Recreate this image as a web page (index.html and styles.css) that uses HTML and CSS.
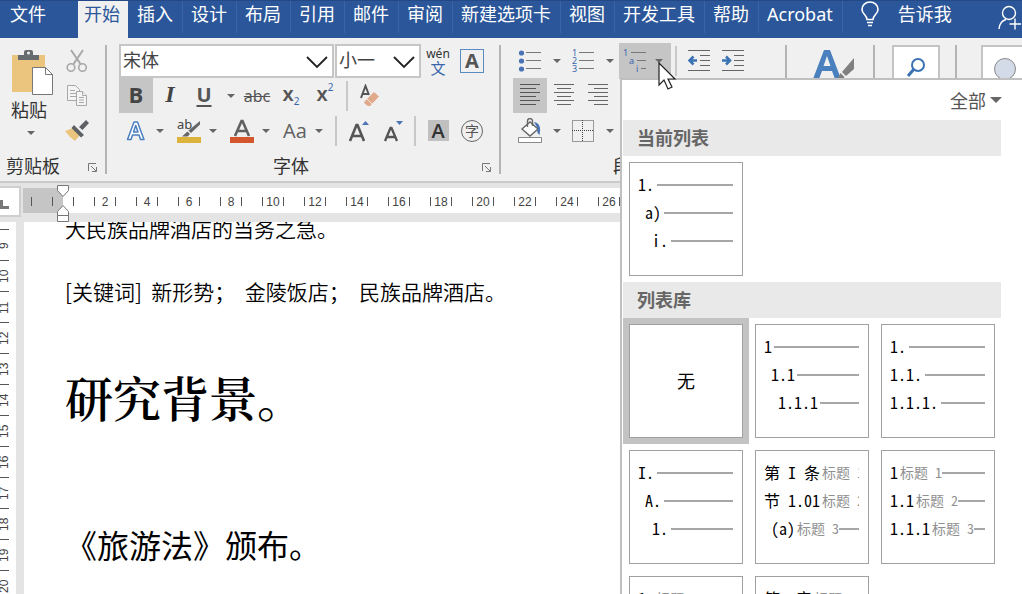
FILE: index.html
```html
<!DOCTYPE html>
<html lang="zh-CN">
<head>
<meta charset="utf-8">
<title>文档</title>
<link rel="stylesheet" href="styles.css">
</head>
<body>
<div class="app">
<nav class="tabs">
  <button class="tab file">文件</button>
  <button class="tab active">开始</button>
  <button class="tab">插入</button>
  <button class="tab">设计</button>
  <button class="tab">布局</button>
  <button class="tab">引用</button>
  <button class="tab">邮件</button>
  <button class="tab">审阅</button>
  <button class="tab">新建选项卡</button>
  <button class="tab">视图</button>
  <button class="tab">开发工具</button>
  <button class="tab">帮助</button>
  <button class="tab">Acrobat</button>
  <button class="tell"><svg width="20" height="26" viewBox="0 0 20 26" fill="none" stroke="#fff" stroke-width="1.6"><path d="M7 18.500C7 14 2 13 2 8.500a8 7.500 0 0 1 16 0C18 13 13 14 13 18.500zM7 21.500h6M8 24.500h4"/></svg>告诉我</button>
  <button class="share" aria-label="共享"><svg width="24" height="26" viewBox="0 0 24 26" fill="none" stroke="#fff" stroke-width="1.400"><circle cx="11" cy="8" r="6.500"/><path d="M1 24c.5-6 3.500-8.500 7-9.500M17 13.500v11M11.500 19H23"/></svg></button>
</nav>

<div class="ribbon">
  <section class="group clipboard">
    <div class="clip-body">
      <button class="paste"><svg width="44" height="48" viewBox="0 0 44 48"><path fill="#ebc57e" d="M1 6h33v37H1z"/><path fill="#666b70" d="M7 11V6h6V3q0-2 2-2h5q2 0 2 2v3h6v5z"/><circle cx="17.500" cy="4" r="1.500" fill="#eee"/><path fill="#fff" stroke="#777" d="M21.500 18.500h13l7 7v20h-20z"/><path fill="none" stroke="#777" d="M34.500 18.500v7h7"/></svg><span>粘贴</span><i class="caret"></i></button>
      <div class="clip-side">
        <button class="tool" aria-label="剪切"><svg width="22" height="24" viewBox="0 0 22 24" fill="none" stroke="#a8a8a8"><path stroke-width="2" d="M5 1l9.500 14M17 1L7.500 15"/><circle cx="5" cy="18.500" r="3.800" stroke-width="1.600"/><circle cx="16.500" cy="18.500" r="3.800" stroke-width="1.600"/></svg></button>
        <button class="tool" aria-label="复制"><svg width="22" height="24" viewBox="0 0 22 24" fill="#f4f4f4" stroke="#a8a8a8"><path d="M1.500 1.500h8l4 4v11h-12z"/><path d="M4 6.500h5M4 9.500h7M4 12.500h7"/><path d="M10.500 7.500h6l4 4v10h-10z"/><path d="M16.500 7.500v4h4M13 13.500h5M13 16h5M13 18.500h5"/></svg></button>
        <button class="tool" aria-label="格式刷"><svg width="24" height="22" viewBox="0 0 24 22"><path fill="#ebc57e" d="M0 11l8-3 7 7-5 6C6 18 3 15 0 11z"/><path fill="#5d6166" d="M9 5l10 10-3 2.500L6.500 8zM14 7l7-7 3 3-6.500 7z"/></svg></button>
      </div>
    </div>
    <div class="group-foot"><span>剪贴板</span><button class="launch" aria-label="剪贴板设置"><svg width="11" height="11" viewBox="0 0 11 11" fill="none" stroke="#777"><path d="M1.500 9V1.500H9M4 4l5 5M9.500 5v4.500H5"/></svg></button></div>
  </section>

  <section class="group font">
    <div class="row">
      <label class="combo family"><select aria-label="字体"><option>宋体</option></select><svg width="22" height="13" viewBox="0 0 22 13" fill="none" stroke="#222" stroke-width="1.800"><path d="M1 1l10 10L21 1"/></svg></label>
      <label class="combo size"><select aria-label="字号"><option>小一</option></select><svg width="22" height="13" viewBox="0 0 22 13" fill="none" stroke="#222" stroke-width="1.800"><path d="M1 1l10 10L21 1"/></svg></label>
      <button class="tool pinyin"><span>wén</span><b>文</b></button>
      <button class="tool"><span class="boxed">A</span></button>
    </div>
    <div class="row">
      <button class="tool on bold">B</button>
      <button class="tool italic">I</button>
      <button class="tool under">U</button><button class="drop" aria-label="下划线选项"><i class="caret"></i></button>
      <button class="tool strike">abc</button>
      <button class="tool script">x<sub>2</sub></button>
      <button class="tool script">x<sup>2</sup></button>
      <i class="sep"></i>
      <button class="tool" aria-label="清除格式"><svg width="22" height="24" viewBox="0 0 22 24"><path fill="none" stroke="#555" stroke-width="2" d="M2 14L6.500 2 10 11M4 10h5"/><path fill="#e0a98c" d="M6 17l9-9 5 4.500-9 9.500H9l-4-3z"/><path stroke="#f6e4da" d="M8 15l5 5"/></svg></button>
    </div>
    <div class="row">
      <button class="tool" aria-label="文本效果"><svg width="22" height="22" viewBox="0 0 22 22"><path fill="#fff" stroke="#4a7fc0" stroke-width="1.500" stroke-linejoin="round" d="M2.500 19.500L9 2h3.500L19 19.500h-3.500L14 15H7.500L6 19.500zM8.500 12h4.500L10.700 5.500z"/></svg></button><button class="drop tight" aria-label="文本效果选项"><i class="caret"></i></button>
      <button class="tool" aria-label="突出显示"><svg width="26" height="26" viewBox="0 0 26 26"><text x="1" y="11" class="ab">ab</text><path fill="#666" d="M24 3v3.500L15 15l-2.500-2.500zM11.500 13.500l2.500 2.500-2.500 2.500H6z"/><path fill="#dcb43c" d="M1 19h24v6H1z"/></svg></button><button class="drop tight" aria-label="突出显示选项"><i class="caret"></i></button>
      <button class="tool" aria-label="字体颜色"><svg width="26" height="26" viewBox="0 0 26 26"><path fill="none" stroke="#606060" stroke-width="2.600" d="M6 18L12.500 3h1L20 18M8.500 13h9"/><path fill="#d4562c" d="M1 19h24v6H1z"/></svg></button><button class="drop tight" aria-label="字体颜色选项"><i class="caret"></i></button>
      <button class="tool case">Aa</button><button class="drop tight" aria-label="更改大小写选项"><i class="caret"></i></button>
      <i class="sep"></i>
      <button class="tool" aria-label="增大字号"><svg width="24" height="26" viewBox="0 0 24 26"><path fill="none" stroke="#555" stroke-width="2.600" d="M3 23L9.500 7h1L17 23M5.500 18h9"/><path fill="#4a72b4" d="M15 7l3.500-4L22 7z"/></svg></button>
      <button class="tool" aria-label="减小字号"><svg width="24" height="26" viewBox="0 0 24 26"><path fill="none" stroke="#555" stroke-width="2.300" d="M4 23L9.500 10h1L16 23M6 19h8"/><path fill="#4a72b4" d="M15 3l3.500 4L22 3z"/></svg></button>
      <i class="sep"></i>
      <button class="tool"><span class="shade">A</span></button>
      <button class="tool"><span class="circled">字</span></button>
    </div>
    <div class="group-foot"><span>字体</span><button class="launch" aria-label="字体设置"><svg width="11" height="11" viewBox="0 0 11 11" fill="none" stroke="#777"><path d="M1.500 9V1.500H9M4 4l5 5M9.500 5v4.500H5"/></svg></button></div>
  </section>

  <section class="group para">
    <div class="row">
      <button class="tool" aria-label="项目符号"><svg width="24" height="24" viewBox="0 0 24 24"><g fill="#4a72b4"><circle cx="3.500" cy="4" r="2.600"/><circle cx="3.500" cy="12" r="2.600"/><circle cx="3.500" cy="20" r="2.600"/></g><path stroke="#777" d="M8 3.500h15M8 11.500h15M8 19.500h15"/></svg></button><button class="drop" aria-label="项目符号选项"><i class="caret"></i></button>
      <button class="tool" aria-label="编号"><svg width="24" height="24" viewBox="0 0 24 24"><g class="num"><text x="1" y="7">1</text><text x="1" y="15">2</text><text x="1" y="23">3</text></g><path stroke="#777" d="M8 3.500h15M8 11.500h15M8 19.500h15"/></svg></button><button class="drop" aria-label="编号选项"><i class="caret"></i></button>
      <button class="multi on" aria-label="多级列表"><svg width="26" height="24" viewBox="0 0 26 24"><g class="num"><text x="0" y="7">1</text><text x="6" y="15">a</text><text x="13" y="23">i</text></g><path stroke="#777" d="M8 3.500h15M14 11.500h9M18 19.500h5"/></svg><i class="caret"></i></button>
      <i class="sep"></i>
      <button class="tool" aria-label="减少缩进"><svg width="24" height="24" viewBox="0 0 24 24" fill="none"><path stroke="#666" d="M1 1.500h22M13 6.500h10M13 11.500h10M13 16.500h10M1 21.500h22"/><path stroke="#3a72b4" stroke-width="2.500" d="M10 11.500H2M6.500 7.500l-4 4 4 4"/></svg></button>
      <button class="tool" aria-label="增加缩进"><svg width="24" height="24" viewBox="0 0 24 24" fill="none"><path stroke="#666" d="M1 1.500h22M13 6.500h10M13 11.500h10M13 16.500h10M1 21.500h22"/><path stroke="#3a72b4" stroke-width="2.500" d="M1 11.500h8M5 7.500l4 4-4 4"/></svg></button>
    </div>
    <div class="row">
      <button class="tool on" aria-label="左对齐"><svg width="22" height="24" viewBox="0 0 22 24" stroke="#555"><path d="M1 .5h20M1 4.500h16M1 8.500h20M1 12.500h16M1 16.500h20M1 20.500h16"/></svg></button>
      <button class="tool" aria-label="居中"><svg width="22" height="24" viewBox="0 0 22 24" stroke="#666"><path d="M1 .5h20M4 4.500h14M1 8.500h20M4 12.500h14M1 16.500h20M4 20.500h14"/></svg></button>
      <button class="tool" aria-label="右对齐"><svg width="22" height="24" viewBox="0 0 22 24" stroke="#666"><path d="M1 .5h20M7 4.500h14M1 8.500h20M7 12.500h14M1 16.500h20M7 20.500h14"/></svg></button>
    </div>
    <div class="row">
      <button class="tool" aria-label="底纹"><svg width="26" height="26" viewBox="0 0 26 26"><path fill="#fff" stroke="#666" stroke-width="1.400" d="M5 11l8-7 8 7-8 7z"/><path fill="none" stroke="#666" stroke-width="1.400" d="M10.500 9V3a2 2 0 0 1 5 0v5"/><path fill="#4a72b4" d="M17 4c6 1 7 6 5.500 13-2.500-2-3-4-1.500-6z"/><path fill="#fff" stroke="#888" d="M1.500 19.500h23v5h-23z"/></svg></button><button class="drop" aria-label="底纹选项"><i class="caret"></i></button>
      <button class="tool" aria-label="边框"><svg width="22" height="22" viewBox="0 0 22 22" fill="none" stroke="#444" stroke-dasharray="1 1"><path d="M.5.500h21v21H.5zM10.500 0v22M0 10.500h22"/></svg></button><button class="drop" aria-label="边框选项"><i class="caret"></i></button>
    </div>
    <div class="group-foot"><span>段落</span><button class="launch" aria-label="段落设置"><svg width="11" height="11" viewBox="0 0 11 11" fill="none" stroke="#777"><path d="M1.500 9V1.500H9M4 4l5 5M9.500 5v4.500H5"/></svg></button></div>
  </section>

  <section class="group styles">
    <button class="big" aria-label="样式"><svg width="42" height="36" viewBox="0 0 42 36"><path fill="#4a80bd" d="M0 30L11 1h6l11 29h-6l-3-8H9l-3 8zM10.500 17h7L14 7z"/><path fill="#808080" d="M41 9v11l-8 7-4-4zM27.500 24l4 4c-2 3-5 3-7 2z"/></svg></button>
  </section>
  <section class="group edit">
    <button class="framed" aria-label="查找"><svg width="20" height="22" viewBox="0 0 20 22" fill="none" stroke="#3a72b4"><circle cx="12" cy="8" r="6" stroke-width="2"/><path stroke-width="3" d="M8 12l-6 7"/></svg></button>
  </section>
  <section class="group voice">
    <button class="framed" aria-label="语音"><svg width="24" height="24" viewBox="0 0 24 24"><circle cx="12" cy="12" r="10.500" fill="#d3dbe9" stroke="#888"/></svg></button>
  </section>
</div>

<div class="hruler">
  <button class="corner" aria-label="制表符"><svg width="9" height="9" viewBox="0 0 9 9"><path fill="none" stroke="#777" stroke-width="3" d="M1.500 0v7.500H9"/></svg></button>
  <div class="scale">
    <span class="cell past"></span><span class="cell"></span><span class="cell">2</span><span class="cell">4</span><span class="cell">6</span><span class="cell">8</span><span class="cell">10</span><span class="cell">12</span><span class="cell">14</span><span class="cell">16</span><span class="cell">18</span><span class="cell">20</span><span class="cell">22</span><span class="cell">24</span><span class="cell">26</span>
    <svg class="indent" width="14" height="38" viewBox="0 0 14 38" fill="#fff" stroke="#777"><path d="M1.500.500h11v5L7 11.500l-5.500-6zM7 20.500l5.500 6v4h-11v-4zM1.500 30.500h11v6h-11z"/></svg>
  </div>
</div>

<div class="work">
  <div class="vruler">
    <span>9</span><span>10</span><span>11</span><span>12</span><span>13</span><span>14</span><span>15</span><span>16</span><span>17</span><span>18</span><span>19</span><span>20</span>
  </div>
  <main class="page">
    <p class="body">大民族品牌酒店的当务之急。</p>
    <p class="body">[关键词]&nbsp; 新形势；&nbsp; 金陵饭店；&nbsp; 民族品牌酒店。</p>
    <h1>研究背景。</h1>
    <h2>《旅游法》颁布。</h2>
  </main>
</div>

<div class="menu">
  <button class="all">全部<i class="caret"></i></button>
  <h3>当前列表</h3>
  <div class="grid">
    <button class="item"><span class="l">1.<hr></span><span class="l in1">a)<hr></span><span class="l in2">i.<hr></span></button>
  </div>
  <h3>列表库</h3>
  <div class="grid">
    <button class="item none picked">无</button>
    <button class="item snug"><span class="l">1<hr></span><span class="l in1">1.1<hr></span><span class="l in2">1.1.1<hr></span></button>
    <button class="item"><span class="l">1.<hr></span><span class="l">1.1.<hr></span><span class="l">1.1.1.<hr></span></button>
    <button class="item"><span class="l">I.<hr></span><span class="l in1">A.<hr></span><span class="l in2">1.<hr></span></button>
    <button class="item heads"><span class="l">第 I 条<em>标题 1</em></span><span class="l">节 1.01<em>标题 2</em></span><span class="l in1">(a)<em>标题 3</em><hr></span></button>
    <button class="item heads"><span class="l">1<em>标题 1</em><hr></span><span class="l">1.1<em>标题 2</em><hr></span><span class="l">1.1.1<em>标题 3</em><hr></span></button>
    <button class="item heads"><span class="l">1.<em>标题 1</em><hr></span></button>
    <button class="item heads"><span class="l">第一章<em>标题 1</em></span></button>
  </div>
</div>
<svg class="pointer" width="20" height="30" viewBox="0 0 20 30"><path fill="#fff" stroke="#222" stroke-width="1.200" d="M1 1v22l5-5 4 9 4-2-4-8h7z"/></svg>
</div>
</body>
</html>
```
FILE: styles.css
```css
* { box-sizing: border-box; }
body {
  margin: 0;
  font-family: "Noto Sans", "Noto Sans CJK SC", sans-serif;
  font-size: 18px;
  color: #333;
}
button {
  margin: 0;
  padding: 0;
  border: 0;
  background: none;
  color: inherit;
  font: inherit;
}
svg { display: block; flex: none; }
.app {
  position: relative;
  display: flex;
  flex-direction: column;
  height: 100vh;
  overflow: hidden;
  background: #e4e4e4;
}

/* Tab strip */
.tabs {
  display: flex;
  flex: none;
  height: 38px;
  background: #2b579a;
  border-top: 1px solid #234a86;
  color: #fff;
  white-space: nowrap;
}
.tab {
  height: 32px;
  padding: 0 9px 6px 8px;
  border-right: 1px solid #3a66a6;
  line-height: 26px;
}
.tab.file { width: 78px; padding-left: 10px; text-align: left; border: 0; }
.tab.active {
  height: 37px;
  width: 50px;
  padding: 0 2px 11px 0;
  margin-right: 1px;
  border: 0;
  background: #f0f0f0;
  color: #2b579a;
}
.tell { display: flex; gap: 18px; height: 26px; margin-left: 17px; line-height: 26px; }
.share { display: flex; height: 30px; margin-left: auto; padding-top: 4px; }

/* Ribbon */
.ribbon {
  display: flex;
  flex: none;
  height: 145px;
  padding-top: 5px;
  background: #f0f0f0;
  border-bottom: 2px solid #cacaca;
}
.group { position: relative; flex: none; display: flex; flex-direction: column; }
.group::after {
  content: "";
  position: absolute;
  top: 2px;
  right: 0;
  bottom: 7px;
  width: 2px;
  background: #b4b4b4;
}
.clipboard { width: 107px; }
.font { width: 394px; padding-left: 12px; }
.para { width: 286px; padding-left: 12px; }
.styles { width: 88px; padding: 6px 0 0 26px; }
.edit { width: 82px; padding: 2px 0 0 17px; }
.voice { flex: 1; padding: 2px 0 0 24px; overflow: hidden; }
.voice::after { display: none; }
.row { display: flex; height: 35px; align-items: center; }
.tool {
  display: flex;
  flex: none;
  align-items: center;
  justify-content: center;
  width: 34px;
  height: 35px;
}
.on { background: #c5c5c5; }
.drop { display: flex; flex: none; justify-content: center; align-items: center; width: 19px; height: 35px; }
.drop.tight { padding-right: 6px; }
.caret {
  flex: none;
  width: 0;
  height: 0;
  border: 4px solid transparent;
  border-top-color: #666;
  border-bottom: 0;
}
.sep { flex: none; width: 2px; height: 30px; margin: 0 5px 0 4px; background: #c8c8c8; }
.group-foot {
  display: flex;
  align-items: center;
  height: 32px;
  padding: 4px 6px 0 0;
  line-height: 28px;
  color: #333;
}
.group-foot span { flex: 1; padding-left: 6px; text-align: center; }
.font .group-foot span, .para .group-foot span { padding: 0 18px 0 0; }
.clipboard .group-foot span { text-align: left; }
.launch { width: 14px; padding-top: 3px; }

.clip-body { display: flex; height: 105px; }
.paste { display: flex; flex-direction: column; align-items: center; width: 60px; padding: 6px 2px 0 0; line-height: 26px; }
.paste svg { margin-left: 7px; }
.paste .caret { margin: 8px 0 0 4px; }
.clip-side { display: flex; flex-direction: column; }

.combo { position: relative; flex: none; height: 34px; border: 2px solid #c6c6c6; background: #fff; }
.combo select {
  width: 100%;
  height: 100%;
  padding: 0 0 2px 2px;
  border: 0;
  appearance: none;
  background: none;
  color: #444;
  font: inherit;
}
.combo svg { position: absolute; top: 10px; right: 4px; pointer-events: none; }
.family { width: 215px; }
.size { width: 86px; margin-left: 1px; }

.pinyin { flex-direction: column; font-size: 12px; line-height: 15px; color: #333; }
.pinyin b { font-size: 15px; line-height: 15px; font-weight: 400; color: #3a66ae; }
.boxed {
  width: 24px;
  height: 24px;
  border: 1px solid #5b8bc4;
  font: 700 20px/22px "Open Sans", sans-serif;
  color: #555;
}
.bold { padding-bottom: 4px; font: 700 22px "Open Sans", sans-serif; color: #444; }
.italic { padding-bottom: 3px; font: italic 700 24px "Liberation Serif", serif; color: #444; }
.under { padding-bottom: 3px; font: 700 20px "Open Sans", sans-serif; color: #555; text-decoration: underline; text-underline-offset: 3px; }
.strike { font-size: 16px; color: #555; text-decoration: line-through; }
.script { font-size: 20px; font-weight: 600; color: #555; padding-bottom: 4px; }
.script sub, .script sup { font-size: 10px; font-weight: 400; color: #3a66ae; }
.script sub { padding-top: 14px; }
.script sup { padding-bottom: 14px; }
.case { font: 500 20px "Open Sans", sans-serif; color: #606060; }
.shade { width: 21px; height: 21px; background: #c0c0c0; font: 600 20px/21px "Open Sans", sans-serif; }
.circled { width: 22px; height: 22px; border: 1px solid #666; border-radius: 50%; font-size: 14px; line-height: 19px; color: #555; }
.ab { font: 13px "Noto Sans", sans-serif; fill: #444; }
.num { font: 9px "Noto Sans", sans-serif; fill: #3a66ae; }
.multi { display: flex; flex: none; align-items: center; gap: 6px; width: 52px; height: 36px; padding-left: 4px; }
.framed {
  display: flex;
  justify-content: center;
  width: 48px;
  height: 60px;
  padding-top: 10px;
  border: 2px solid #c4c4c4;
  background: #fff;
}

/* Horizontal ruler */
.hruler { display: flex; flex: none; height: 39px; padding-top: 3px; }
.corner {
  display: flex;
  align-items: flex-end;
  width: 21px;
  height: 31px;
  padding: 0 0 6px;
  border: 2px solid #cfcfcf;
  border-left: 0;
  background: #fff;
}
.scale {
  position: relative;
  display: flex;
  flex: 1;
  height: 25px;
  margin: 2px 0 0 2px;
  background: linear-gradient(to right, #c5c5c5 40px, #fff 40px);
}
.cell {
  display: flex;
  flex: none;
  align-items: center;
  justify-content: space-between;
  width: 42px;
  padding: 2px 10px 0;
  font: 12px "Liberation Sans", sans-serif;
  color: #444;
}
.cell::before, .cell::after { content: ""; width: 1px; height: 9px; background: #555; }
.cell.past { width: 19px; padding-left: 0; justify-content: flex-end; }
.cell.past::before { display: none; }
.indent { position: absolute; left: 33px; top: -3px; }

/* Document area */
.work { display: flex; flex: 1; min-height: 0; }
.vruler { width: 16px; padding-top: 7px; overflow: hidden; background: #fff; }
.vruler span {
  display: block;
  width: 9px;
  height: 31px;
  padding-bottom: 1px;
  border-bottom: 1px solid #555;
  writing-mode: vertical-rl;
  transform: rotate(180deg);
  text-align: center;
  font: 12px/9px "Liberation Sans", sans-serif;
  color: #444;
}
.page {
  flex: 1;
  margin-left: 8px;
  padding-left: 41px;
  overflow: hidden;
  background: #fff;
  color: #000;
  font-family: "Noto Sans CJK SC", sans-serif;
}
.page p, .page h1, .page h2 { margin: 0; }
.page .body { margin: -10px 0 41px; font-size: 21px; line-height: 32px; font-weight: 350; }
.page h1 { margin: 50px 0 0; font: 600 48px/80px "Noto Serif CJK SC", "Noto Sans CJK SC", serif; }
.page h2 { margin-top: 79px; font-size: 32px; line-height: 56px; font-weight: 400; }

/* Multilevel list gallery */
.menu {
  position: absolute;
  top: 78px;
  left: 620px;
  right: 0;
  bottom: 0;
  overflow: hidden;
  padding-left: 1px;
  border: 2px solid #c0c0c0;
  border-width: 2px 0 0 2px;
  background: #fff;
}
.all { display: flex; align-items: center; gap: 4px; height: 40px; margin: 0 20px 0 auto; color: #555; }
.all .caret { border-width: 6px 6px 0; }
.menu h3 {
  height: 36px;
  margin: 0 21px 0 0;
  padding-left: 14px;
  background: #e9e9e9;
  font-size: 18px;
  line-height: 36px;
  font-weight: 700;
  color: #666;
}
.grid { display: grid; grid-template-columns: repeat(3, 114px); gap: 12px; padding: 6px; }
.item {
  display: flex;
  flex-direction: column;
  height: 114px;
  padding: 7px 9px 0 8px;
  border: 1px solid #a0a0a0;
  background: #fff;
  color: #000;
  font: 500 16px "Noto Sans Mono CJK SC", "Noto Sans CJK SC", monospace;
}
.item.none { align-items: center; justify-content: center; padding: 0 0 2px; font-size: 18px; }
.picked { outline: 6px solid #c3c3c3; }
.l { display: flex; align-items: center; width: 100%; height: 28px; overflow: hidden; line-height: 24px; white-space: pre; }
.in1 { padding-left: 7px; }
.in2 { padding-left: 14px; }
.l hr { flex: 1; height: 2px; margin: 2px 0 0 3px; border: 0; background: #a6a6a6; }
.l em { margin-left: 2px; font-size: 14px; font-style: normal; font-weight: 400; color: #909090; }
.snug hr { margin-left: 2px; }
.heads hr { margin-left: 0; }

.pointer { position: absolute; left: 658px; top: 62px; }
```
